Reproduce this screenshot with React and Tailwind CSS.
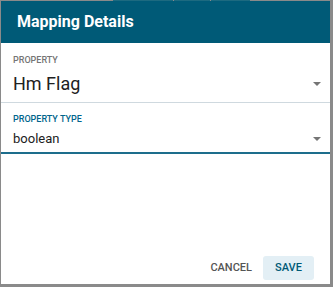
export default function App() {
  const font = { fontFamily: 'Roboto, "Liberation Sans", sans-serif' };
  return (
    <div className="w-[333px] h-[287px] bg-[#8a8a8a] flex flex-col" style={font}>
      <div className="h-px flex shrink-0">
        <div className="w-[113px]" />
        <div className="w-[60px] bg-[#1d6a80]" />
        <div className="w-px" />
        <div className="w-[36px] bg-[#1d6a80]" />
        <div className="w-px" />
        <div className="w-[39px] bg-[#1d6a80]" />
      </div>
      <div className="flex-1 flex pl-px pr-[3px] pb-[3px]">
        <div className="flex-1 bg-white flex flex-col">
          <div className="h-[42px] bg-[#005a77] flex items-center pl-4">
            <span className="text-white font-bold text-[16px] leading-none">Mapping Details</span>
          </div>
          <div className="pl-3 pt-[11px] pb-[6px] border-b border-[#cfd9df]">
            <div className="text-[9px] leading-[12px] text-[#757575] font-medium uppercase">Property</div>
            <div className="mt-[6px] flex items-center justify-between pr-[9px]">
              <span className="text-[18px] leading-[24px] text-[#212121]">Hm Flag</span>
              <svg width="8" height="4" viewBox="0 0 8 4"><path d="M0 0h8L4 4z" fill="#757575" /></svg>
            </div>
          </div>
          <div className="pl-3 pt-[10px] pb-[4px] border-b-2 border-[#1d6d8c]">
            <div className="text-[9px] leading-[12px] text-[#00658c] font-medium uppercase">Property Type</div>
            <div className="mt-[5px] flex items-center justify-between pr-[9px]">
              <span className="text-[13px] leading-[18px] text-[#212121]">boolean</span>
              <svg width="8" height="4" viewBox="0 0 8 4"><path d="M0 0h8L4 4z" fill="#757575" /></svg>
            </div>
          </div>
          <div className="flex-1" />
          <div className="flex justify-end items-center pr-[16px] pb-[4px]">
            <button className="h-6 pl-[13px] pr-[11px] text-[11px] font-medium text-[#555] uppercase">Cancel</button>
            <button className="h-6 w-[51px] rounded-[3px] bg-[#e3eff5] text-[11px] font-medium text-[#005a77] uppercase">Save</button>
          </div>
        </div>
      </div>
    </div>
  );
}
